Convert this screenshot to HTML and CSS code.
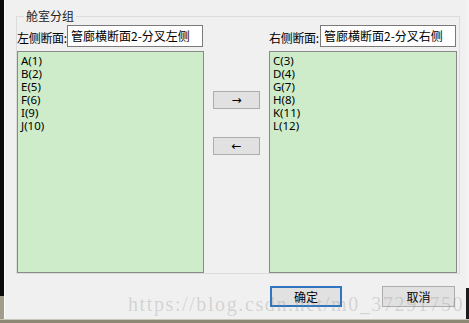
FILE: index.html
```html
<!DOCTYPE html>
<html lang="zh">
<head>
    <meta charset="UTF-8">
    <meta name="viewport" content="width=device-width, initial-scale=1.0">
    <title>舱室分组</title>
    <link rel="stylesheet" href="styles.css">
</head>
<body>
    <div class="screen">
        <div class="main">
            <div class="edge-left"></div>

            <!-- 对话框 -->
            <div class="dialog">
                <fieldset class="group">
                    <legend>舱室分组</legend>
                    <div class="panel">
                        <div class="field">
                            <span class="label">左侧断面:</span>
                            <div class="textbox">管廊横断面2-分叉左侧</div>
                        </div>

                        <div class="movers">
                            <button class="move-btn">&rarr;</button>
                            <button class="move-btn">&larr;</button>
                        </div>

                        <div class="field">
                            <span class="label">右侧断面:</span>
                            <div class="textbox">管廊横断面2-分叉右侧</div>
                        </div>

                        <ul class="list">
                            <li>A(1)</li>
                            <li>B(2)</li>
                            <li>E(5)</li>
                            <li>F(6)</li>
                            <li>I(9)</li>
                            <li>J(10)</li>
                        </ul>
                        <ul class="list">
                            <li>C(3)</li>
                            <li>D(4)</li>
                            <li>G(7)</li>
                            <li>H(8)</li>
                            <li>K(11)</li>
                            <li>L(12)</li>
                        </ul>
                    </div>
                </fieldset>

                <div class="actions">
                    <button class="btn btn-primary">确定</button>
                    <button class="btn">取消</button>
                </div>
            </div>

            <div class="edge-right"></div>
        </div>
        <div class="edge-bottom"></div>

        <!-- 水印 -->
        <div class="watermark">https://blog.csdn.net/m0_37291750</div>
    </div>
</body>
</html>
```

FILE: styles.css
```css
body {
    margin: 0;
    background: #f0f0f0;
    overflow: hidden;
    font-family: "Noto Sans", "Noto Sans CJK SC", sans-serif;
    font-size: 12px;
    color: #000;
}

.screen {
    width: 469px;
    height: 323px;
    position: relative;
    display: flex;
    flex-direction: column;
}

.main {
    height: 319px;
    display: flex;
}

/* 窗口外边缘 */
.edge-left {
    width: 4px;
    background: linear-gradient(#0a0a0a 0 296px, #a29d8a 296px);
}
.edge-right {
    width: 3px;
    background: linear-gradient(#f3f3f3 0 288px, #1c1c1c 288px);
}
.edge-bottom {
    height: 4px;
    background: #8c8874;
    border-top: 1px solid #c9c6b8;
    box-sizing: border-box;
}

.dialog {
    flex: 1;
    display: flex;
    flex-direction: column;
    border-left: 1px solid #fbfbfb;
}

/* 分组框 */
.group {
    margin: 9px 6px 0 11px;
    padding: 2px 1px 0 0;
    border: 1px solid #dcdcdc;
}
.group legend {
    margin-left: 7px;
    padding: 0 2px;
    line-height: 14px;
    font-family: "Noto Sans CJK SC", sans-serif;
    color: #222;
}

.panel {
    display: grid;
    grid-template-columns: 187px 65px 188px;
    grid-template-rows: 22px 222px;
    row-gap: 4px;
}

.field {
    display: flex;
    align-items: flex-end;
    justify-content: space-between;
}
.label {
    font-family: "Noto Sans CJK SC", sans-serif;
    line-height: 16px;
    margin-bottom: 1px;
    white-space: nowrap;
    letter-spacing: -0.3px;
}
.textbox {
    flex: none;
    width: 131px;
    height: 20px;
    border: 1px solid #7a7a7a;
    background: #fff;
    font-family: "Noto Sans CJK SC", sans-serif;
    line-height: 20px;
    padding-left: 3px;
    margin-right: 1px;
    white-space: nowrap;
}

/* 中间移动按钮 */
.movers {
    grid-row: 1 / 3;
    grid-column: 2;
    display: flex;
    flex-direction: column;
    padding: 66px 0 0 9px;
    gap: 28px;
}
.move-btn {
    width: 47px;
    height: 18px;
    padding: 0;
    border: 1px solid #adadad;
    background: #e1e1e1;
    font-size: 12px;
    line-height: 14px;
    font-family: "DejaVu Sans", sans-serif;
    color: #000;
}

/* 列表框 */
.list {
    margin: 0;
    padding: 2px 3px;
    list-style: none;
    background: #ceecc9;
    border: 1px solid #848c84;
    font-size: 11.5px;
    line-height: 13px;
}
.list:nth-of-type(1) {
    grid-column: 1;
}
.list:nth-of-type(2) {
    grid-column: 3;
}

/* 底部按钮 */
.actions {
    display: flex;
    justify-content: flex-end;
    gap: 40px;
    padding-right: 11px;
    margin-top: 12px;
}
.btn {
    width: 73px;
    height: 21px;
    padding: 0;
    border: 1px solid #adadad;
    background: #e1e1e1;
    font-family: "Noto Sans CJK SC", sans-serif;
    font-size: 12px;
    color: #000;
}
.btn-primary {
    width: 72px;
    border: 2px solid #2f75bf;
}

.watermark {
    position: absolute;
    left: 128px;
    top: 293px;
    font-family: "Liberation Serif", serif;
    font-size: 20px;
    letter-spacing: 1.6px;
    color: rgba(140, 140, 140, 0.3);
    white-space: nowrap;
}
```
